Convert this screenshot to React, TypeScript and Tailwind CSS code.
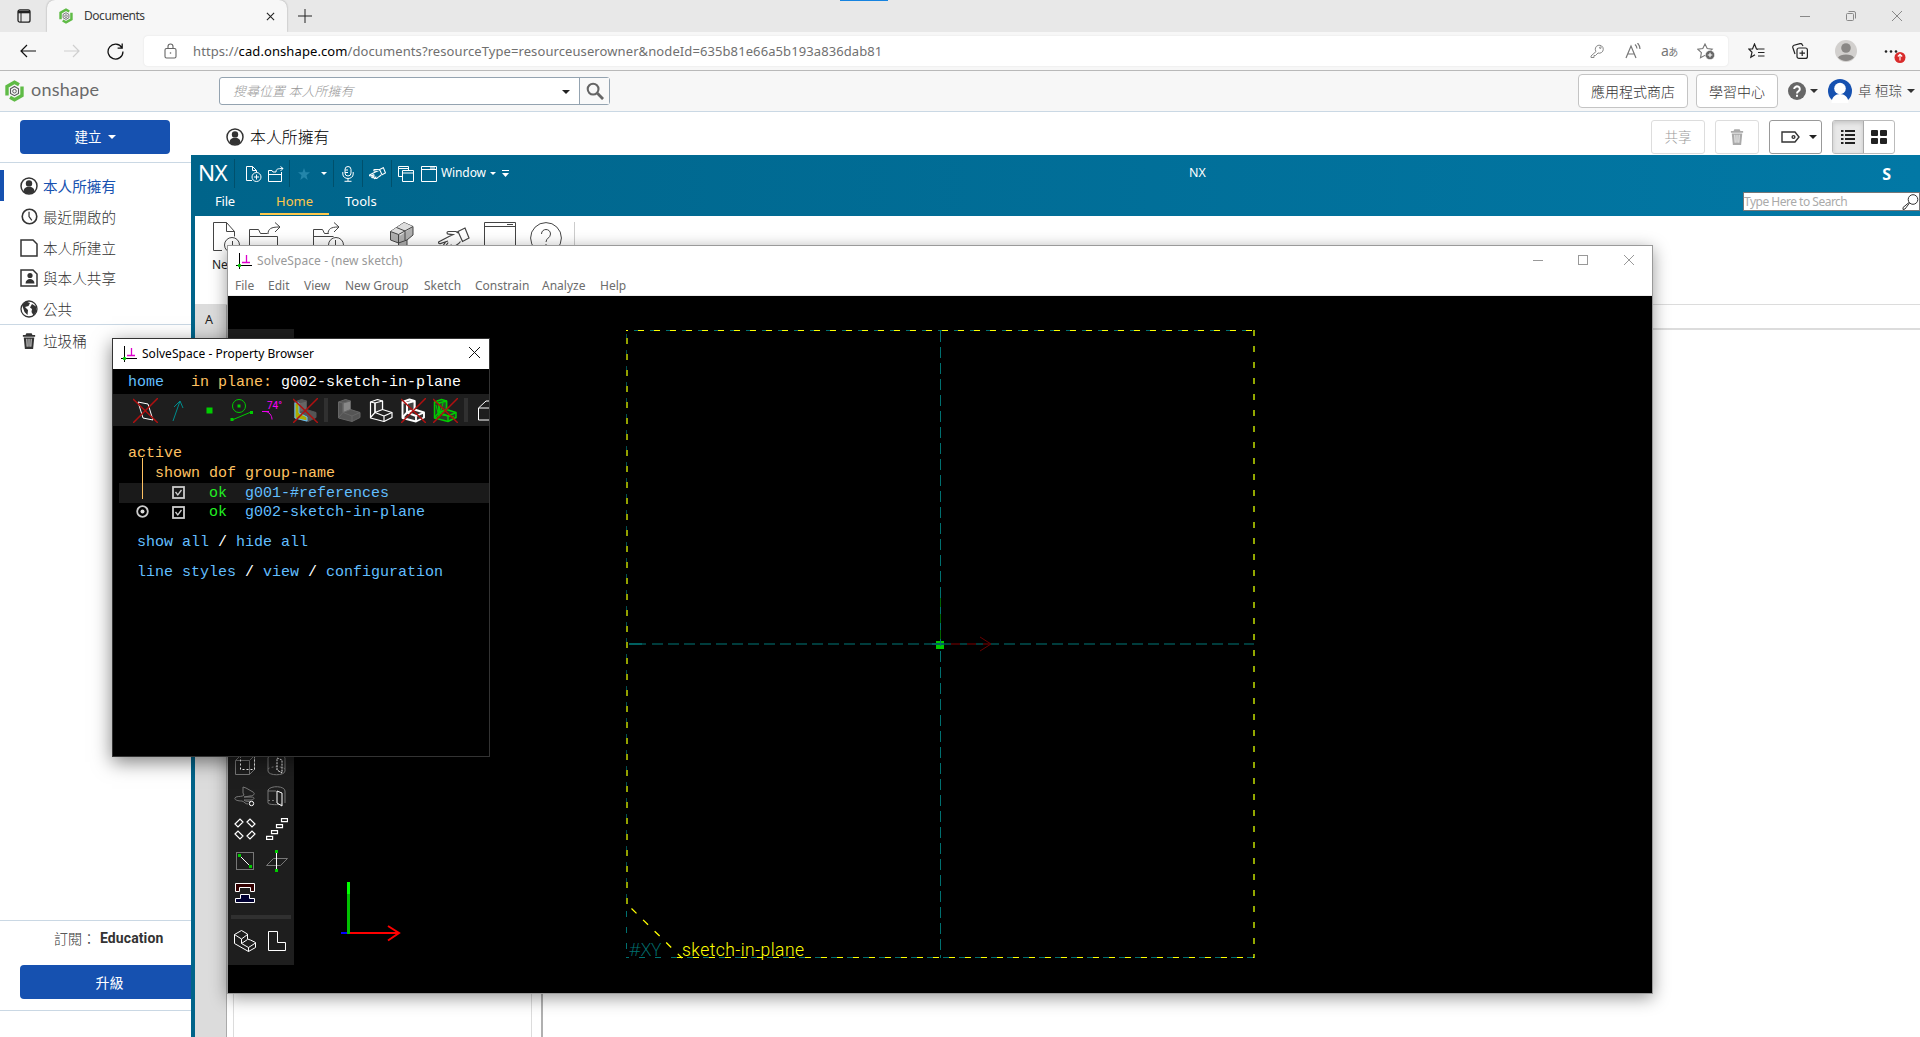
import React from "react";

type IconProps = { box: string; className?: string; children: React.ReactNode; stroke?: string; sw?: number };

function Icon({ box, className = "", children, stroke = "currentColor", sw = 1 }: IconProps) {
  return (
    <svg viewBox={box} className={"shrink-0 " + className} fill="none" stroke={stroke} strokeWidth={sw}>
      {children}
    </svg>
  );
}

function Caret({ className = "h-[4px] w-[8px]" }: { className?: string }) {
  return (
    <svg viewBox="0 0 8 4" preserveAspectRatio="none" className={"shrink-0 " + className} fill="currentColor">
      <path d="M0 0h8L4 4z" />
    </svg>
  );
}

function OnshapeMark({ className }: { className: string }) {
  return (
    <Icon box="0 0 20 22" className={className}>
      <path d="M2.500 15.500V6.500L10 2.200l4.500 2.600" stroke="#5fbb46" strokeWidth="3.400" />
      <path d="M17.500 6.500v9L10 19.800l-4.500-2.600" stroke="#5fbb46" strokeWidth="3.400" />
      <path d="M10 6.500l4 2.300v4.600l-4 2.300-4-2.300V8.800z" stroke="#58595b" strokeWidth="1.100" />
      <circle cx="10" cy="11.200" r="1.800" stroke="#58595b" strokeWidth="1" />
    </Icon>
  );
}

function Person({ className }: { className: string }) {
  return (
    <Icon box="0 0 18 18" className={className} stroke="#333">
      <circle cx="9" cy="9" r="8" strokeWidth="1.5" />
      <circle cx="9" cy="6.4" r="3.2" fill="#333" stroke="none" />
      <path d="M3.6 14.4c0-3 2-4.6 5.4-4.6s5.4 1.6 5.4 4.6C13 16 11 16.800 9 16.800S5 16 3.600 14.400z" fill="#333" stroke="none" />
    </Icon>
  );
}

function Trash({ className }: { className: string }) {
  return (
    <svg viewBox="0 0 16 18" className={"shrink-0 " + className} fill="currentColor">
      <path d="M5 0h6l1 2h3v2H1V2h3z M2 5h12l-1.300 13H3.300z" />
      <path d="M5.500 6.500l.4 9M8 6.500v9M10.500 6.500l-.4 9" stroke="#fff" strokeWidth="1" />
    </svg>
  );
}

function TabStrip() {
  return (
    <div className="flex h-8 bg-[#e8e8e8] text-[#3b3b3b]">
      <div className="flex w-[47px] items-center justify-center">
        <Icon box="0 0 14 14" className="h-[14px] w-[14px]" stroke="#222">
          <rect x="1" y=".8" width="12" height="12.400" rx="2" strokeWidth="1.3" />
          <path d="M1 3h12" strokeWidth="2.600" />
          <path d="M4 4v9" />
        </Icon>
      </div>
      <div className="flex h-full w-[240px] items-center rounded-t-lg bg-[#f7f7f7] pl-[11px] pr-[12px] shadow-[0_0_2px_rgba(0,0,0,0.35)]">
        <OnshapeMark className="h-4 w-[16px]" />
        <span className="ml-[10px] flex-1 text-[12px] tracking-[-0.45px]">Documents</span>
        <Icon box="0 0 10 10" className="h-[9px] w-[9px]" stroke="#222" sw={1.2}><path d="M1 1l8 8M9 1l-8 8" /></Icon>
      </div>
      <Icon box="0 0 14 14" className="ml-[11px] mt-[9px] h-[14px] w-[14px]" stroke="#222"><path d="M7 0v14M0 7h14" /></Icon>
      <div className="flex flex-1 items-center justify-end gap-[36px] pr-[18px] text-[#888]">
        <Icon box="0 0 10 10" className="h-[10px] w-[10px]"><path d="M0 5.500h10" /></Icon>
        <Icon box="0 0 10 10" className="h-[10px] w-[10px]"><rect x=".5" y="2.500" width="7" height="7" rx="1" /><path d="M2.500 .5H8a1.500 1.500 0 0 1 1.500 1.500v5.500" /></Icon>
        <Icon box="0 0 10 10" className="h-[10px] w-[10px]"><path d="M0 0l10 10M10 0L0 10" /></Icon>
      </div>
    </div>
  );
}

function AddressBar() {
  return (
    <div className="flex h-[39px] items-center border-b border-[#b9b9b9] bg-[#f7f7f7]">
      <Icon box="0 0 16 14" className="ml-5 h-[14px] w-[16px]" stroke="#111" sw={1.2}><path d="M16 7H1M7 1L1 7l6 6" /></Icon>
      <Icon box="0 0 16 14" className="ml-[28px] h-[14px] w-[16px]" stroke="#cfcfcf" sw={1.200}><path d="M0 7h15M9 1l6 6-6 6" /></Icon>
      <Icon box="0 0 16 16" className="ml-[27px] h-[17px] w-[17px]" stroke="#111" sw={1.200}><path d="M14 4.500A7 7 0 1 0 15 8M14.300 .5v4.300H10" /></Icon>
      <div className="ml-5 flex h-[30px] w-[1584px] items-center rounded bg-white pl-5 pr-[13px] text-[#707070] shadow-[0_0_2px_rgba(0,0,0,0.1)]">
        <Icon box="0 0 13 16" className="h-[16px] w-[13px]" stroke="#666" sw={1.100}>
          <rect x="1" y="5.500" width="11" height="9.500" rx="1.500" /><path d="M4 5.500V3.500a2.500 2.500 0 0 1 5 0v2" /><circle cx="6.500" cy="10" r=".8" fill="#666" stroke="none" />
        </Icon>
        <span className="ml-4 flex-1 whitespace-nowrap pt-px text-[13px] tracking-[0.095px]">
          https://<span className="text-black">cad.onshape.com</span>/documents?resourceType=resourceuserowner&amp;nodeId=635b81e66a5b193a836dab81
        </span>
        <Icon box="0 0 14 14" className="h-[14px] w-[14px]" stroke="#888"><path d="M6 7.500L1 12v1.500h3v-2h1.500L8 9a4 4 0 1 0-2-1.500z" /><circle cx="10.300" cy="3.700" r=".8" /></Icon>
        <Icon box="0 0 16 16" className="ml-[21px] h-4 w-4" stroke="#777" sw={1.200}><path d="M1 15L6 3l5 12M3 11h6M10 1.500a6 6 0 0 1 2 4M12.500 0A9 9 0 0 1 15 6" /></Icon>
        <span className="ml-[20px] w-[19px] text-[14px] leading-none tracking-[-0.5px] text-[#777]">a<span className="text-[10px]">あ</span></span>
        <Icon box="0 0 18 17" className="ml-[17px] h-[17px] w-[18px]" stroke="#777" sw={1.100}>
          <path d="M8 1l2.200 4.500 5 .7-3.600 3.500.8 5L8 12.300 3.500 14.700l.9-5L.8 6.200l5-.7z" /><circle cx="13" cy="12" r="4.600" fill="#666" stroke="#fff" strokeWidth=".5" /><path d="M13 9.700v4.600M10.700 12h4.600" stroke="#fff" />
        </Icon>
      </div>
      <Icon box="0 0 17 16" className="ml-5 h-4 w-[17px]" stroke="#222" sw={1.200}><path d="M10 6.500L8.500 6 6.500 1l-2 5H.8L4 9.300l-1.200 5L7 11.800M9 6h7.500M10 9.500h6.500M10 13h6.500" /></Icon>
      <Icon box="0 0 16 16" className="ml-[27px] h-4 w-4" stroke="#222" sw={1.200}><rect x="5" y="5" width="10.400" height="10.400" rx="2" /><path d="M10.200 7.500v5.500M7.500 10.200H13M3 11L.8 4.500A2 2 0 0 1 2 2.200L8 .6a2 2 0 0 1 2.300 1.200L11 3" /></Icon>
      <svg viewBox="0 0 22 22" className="ml-[27px] h-[22px] w-[22px] shrink-0"><circle cx="11" cy="11" r="11" fill="#d2d0ce" /><circle cx="11" cy="8" r="4.800" fill="#8a8886" /><path d="M3 17.500c2-4 14-4 16 0a11 11 0 0 1-16 0z" fill="#8a8886" /></svg>
      <svg viewBox="0 0 22 16" className="ml-[27px] mt-[9px] h-[16px] w-[22px] shrink-0"><g fill="#222"><circle cx="2" cy="3.500" r="1.300" /><circle cx="7" cy="3.500" r="1.300" /><circle cx="12" cy="3.500" r="1.300" /></g><circle cx="16" cy="9.500" r="5.500" fill="#d92b2b" /><path d="M16 12.500v-6M13.800 8.500L16 6.300l2.200 2.200" stroke="#fff" fill="none" strokeWidth="1.100" /></svg>
    </div>
  );
}

function OnshapeHeader() {
  return (
    <div className="flex h-[41px] items-center border-b border-[#cad8e4] bg-[#f7f7f7] text-[#333]">
      <OnshapeMark className="ml-[4px] h-[22px] w-[21px]" />
      <span className="ml-[6px] w-[71px] pb-[3px] font-[Lato] text-[18px] tracking-[0.25px] text-[#6a6a6a]">onshape</span>
      <div className="ml-[117px] flex h-7 w-[391px] items-stretch rounded-[3px] border border-[#94a3b0] bg-white">
        <div className="flex flex-1 items-center pl-[13px] pr-[9px]">
          <span className="flex-1 pt-[2px] text-[13px] font-light italic text-[#999]">搜尋位置 本人所擁有</span>
          <Caret className="mt-[2px] h-[4px] w-[8px] text-[#222]" />
        </div>
        <div className="flex w-[30px] items-center justify-center border-l border-[#94a3b0] bg-[#f9f9f9]">
          <Icon box="0 0 19 19" className="h-[18px] w-[18px]" stroke="#666"><circle cx="7.500" cy="7.500" r="5.700" strokeWidth="2.200" /><path d="M12 12l6 6" strokeWidth="3" /></Icon>
        </div>
      </div>
      <div className="flex flex-1 items-center justify-end pr-[5px] text-[14px] font-light">
        <button className="h-[34px] w-[110px] rounded border border-[#c4c4c4] bg-white">應用程式商店</button>
        <button className="ml-2 h-[34px] w-[82px] rounded border border-[#c4c4c4] bg-white">學習中心</button>
        <svg viewBox="0 0 18 18" className="ml-[10px] h-[18px] w-[18px]"><circle cx="9" cy="9" r="9" fill="#666" /><path d="M6.200 7a2.800 2.600 0 1 1 4.300 2.200c-1 .7-1.500 1-1.500 2.200M9 12.700v2" stroke="#fff" strokeWidth="2" fill="none" /></svg>
        <Caret className="ml-[4px] h-[4px] w-[8px] text-[#333]" />
        <svg viewBox="0 0 24 24" className="ml-[10px] h-6 w-6 text-[#1651b0]"><circle cx="12" cy="12" r="12" fill="currentColor" /><circle cx="12" cy="9.500" r="5.800" fill="#fff" /><path d="M3.500 24c0-12 17-12 17 0z" fill="#fff" /></svg>
        <span className="ml-[6px] w-[44px] whitespace-nowrap text-[13.500px]">卓 桓琮</span>
        <Caret className="ml-[5px] h-[4px] w-[8px] text-[#333]" />
      </div>
    </div>
  );
}

function SideItem({ icon, label, active, height = "h-[31px]" }: { icon: React.ReactNode; label: string; active?: boolean; height?: string }) {
  return (
    <div className={"flex items-center border-l-4 pl-4 " + height + " " + (active ? "border-[#1651b0] text-[#1651b0]" : "border-transparent text-[#333]")}>
      <span className="flex w-[18px] justify-center">{icon}</span>
      <span className={"ml-[5px] pt-[2px] text-[14.600px] " + (active ? "" : "font-light")}>{label}</span>
    </div>
  );
}

function Sidebar() {
  return (
    <aside className="flex w-[191px] shrink-0 flex-col bg-white">
      <div className="flex h-[51px] border-b border-[#cad8e4] pl-5 pt-2">
        <button className="flex h-[34px] w-[150px] items-center justify-center gap-[6px] rounded bg-[#1651b0] text-[13.500px] text-white">建立<Caret /></button>
      </div>
      <nav className="pt-[7px]">
        <SideItem active label="本人所擁有" icon={<Person className="h-[18px] w-[18px]" />} />
        <SideItem label="最近開啟的" icon={<Icon box="0 0 18 18" className="h-[17px] w-[17px]" stroke="#333"><circle cx="9" cy="9" r="7.700" strokeWidth="1.700" /><path d="M8.500 4v5l3 4" strokeWidth="1.300" /></Icon>} />
        <SideItem label="本人所建立" icon={<Icon box="0 0 18 18" className="h-[18px] w-[18px]" stroke="#333" sw={1.500}><path d="M1 1h12l4 4v12H1z" /></Icon>} />
        <SideItem height="h-[30px]" label="與本人共享" icon={<Icon box="0 0 18 18" className="h-[18px] w-[18px]" stroke="#333" sw={1.500}><path d="M1 1h12l4 4v12H1z" /><circle cx="10" cy="6.500" r="2.600" fill="#333" stroke="none" /><path d="M5.500 14.500c0-6 9-6 9 0z" fill="#333" stroke="none" /></Icon>} />
        <SideItem label="公共" icon={<Icon box="0 0 18 18" className="h-[18px] w-[18px]" stroke="#333"><circle cx="9" cy="9" r="8" strokeWidth="1.300" /><path d="M2 5l4-3.500L10 3 8.500 6 5 7l3 3-.5 5-3-3zM12 4l4 2.500.5 5-3 4-2-3.500.5-3-2-1.500z" fill="#333" stroke="none" /></Icon>} />
        <div className="h-px bg-[#cad8e4]" />
        <SideItem height="h-[32px]" label="垃圾桶" icon={<Trash className="h-4 w-[14px]" />} />
      </nav>
      <div className="mt-auto flex h-[117px] flex-col border-t border-[#cad8e4] text-[#333]">
        <div className="flex h-[44px] items-center pb-[9px] pl-[54px] text-[14px]">
          <span className="font-light">訂閱：</span><b className="ml-[4px] font-[Roboto] text-[14px] font-bold tracking-[0.1px]">Education</b>
        </div>
        <button className="ml-5 h-[34px] rounded-l bg-[#1651b0] text-[14px] text-white"><span className="mr-[-8px]">升級</span></button>
        <div className="mt-[11px] h-px bg-[#cad8e4]" />
      </div>
    </aside>
  );
}

function Documents() {
  return (
    <main className="flex-1 bg-white">
      <div className="flex h-[51px] items-start pl-[35px] pr-[25px] pt-2 text-[#222]">
        <div className="flex h-[34px] flex-1 items-center"><Person className="h-[18px] w-[18px]" /><span className="ml-[6px] pt-px text-[15.900px] font-light text-black">本人所擁有</span></div>
        <button className="h-[34px] w-[54px] rounded-[3px] border border-[#ddd] text-[13.500px] font-light text-[#999]">共享</button>
        <button className="ml-[10px] flex h-[34px] w-[44px] items-center justify-center rounded-[3px] border border-[#ddd] text-[#aaa]"><Trash className="h-4 w-[14px]" /></button>
        <button className="ml-[10px] flex h-[34px] w-[53px] items-center justify-between rounded-[3px] border border-[#999] pl-[11px] pr-[4px]">
          <Icon box="0 0 19 12" className="h-[12px] w-[19px]" stroke="#333" sw={1.400}><path d="M1 1h13l4 5-4 5H1z" /><circle cx="12.500" cy="6" r="1.400" /></Icon><Caret />
        </button>
        <div className="ml-[10px] flex h-[34px] w-[63px] overflow-hidden rounded-[3px] border border-[#bbb]">
          <div className="flex w-[31px] items-center justify-center border-r border-[#aaa] bg-[#e8e8e8] shadow-[inset_0_2px_4px_rgba(0,0,0,0.15)]">
            <Icon box="0 0 14 14" className="h-[14px] w-[14px]" stroke="#222" sw={1.800}><path d="M0 1h2.500M4 1h10M0 5h2.500M4 5h10M0 9h2.500M4 9h10M0 13h2.500M4 13h10" /></Icon>
          </div>
          <div className="grid flex-1 grid-cols-2 place-content-center justify-center gap-[2px] px-[7px]">
            {[0, 1, 2, 3].map((i) => <div key={i} className="h-[6px] w-[7px] rounded-[1px] bg-[#222]" />)}
          </div>
        </div>
      </div>
    </main>
  );
}

function Sep({ className }: { className: string }) {
  return <div className={"w-px shrink-0 bg-[#00506c] " + className} />;
}

function Hand({ className, sw = 1.2 }: { className: string; sw?: number }) {
  return (
    <Icon box="0 0 32 24" className={className} sw={sw}>
      <path d="M18 4.500H10.500c-2 0-2 2.600 0 2.700l4.500.5-4 1.800-10 5.200c-1.200 1 0 2.300 1.300 1.900L10 14M7.500 15.200l-2.300 3.300c-.5 1.800 1.300 2 2 1l3-4M10 18l-.8 2.500c.2 1.500 1.800 1.300 2.400.5l1.800-3.500M13 20.500c.5 1.500 2 1 3-.5 1.500-2 3.800-1.500 6.500-5.500M18 4.500l2 1.500M20 4.500l4.500 10 6.500-3.500L27 1z" />
    </Icon>
  );
}

function NxWindow() {
  return (
    <section className="absolute bottom-0 left-[191px] right-0 top-[155px] flex flex-col bg-white">
      <div className="flex h-[61px] flex-col bg-gradient-to-r from-[#00648a] to-[#0278a5] text-white">
        <div className="flex h-[37px] items-center">
          <span className="ml-[7px] w-[36px] pb-[2px] text-[22.500px] tracking-[-0.5px]">NX</span>
          <Sep className="h-[29px]" />
          <Icon box="0 0 16 16" className="ml-[11px] h-4 w-4"><path d="M6 14.500H.5V.5h6l4 4v2M6.500 .5v4h4" /><circle cx="10.500" cy="11" r="4.500" /><path d="M10.500 8.500v5M8 11h5" /></Icon>
          <Icon box="0 0 16 16" className="ml-[6px] h-4 w-4"><path d="M8 6H5L4 4.500H.5v11h13V6M.5 8.500h13M8 6c0-3 1.500-3.500 7-3.500M12.500 .500L15 2.500l-2.500 2.500" /></Icon>
          <Sep className="ml-[5px] h-[27px]" />
          <svg viewBox="0 0 12 12" className="ml-[8px] h-[12px] w-[12px]" fill="#2385aa"><path d="M6 0l1.500 4.300H12L8.500 7.200 9.700 12 6 9.200 2.300 12l1.200-4.800L0 4.300h4.500z" /></svg>
          <Caret className="ml-[11px] h-[3px] w-[6px]" />
          <Sep className="ml-[6px] h-[27px]" />
          <Icon box="0 0 12 16" className="ml-[8px] h-4 w-3"><rect x="3" y=".5" width="6" height="9.500" rx="3" /><path d="M.8 6v2c0 6 10.400 6 10.400 0V6M6 12.500V15M2.500 15.300h7M3 4h3M3 6.500h3" /></Icon>
          <Sep className="ml-[8px] h-[27px]" />
          <Hand className="ml-[6px] h-[13px] w-[17px]" sw={2} />
          <Sep className="ml-[5px] h-[27px]" />
          <Icon box="0 0 16 16" className="ml-[6px] h-4 w-4"><path d="M4.500 10.500h-4V.5h10v4M.5 2.500h10M4.500 4.500h11v11h-11zM4.500 7h11" /></Icon>
          <Icon box="0 0 16 16" className="ml-[7px] h-4 w-4"><path d="M.5 .5h15v15H.5zM.5 3.500h15M9 2h5" /></Icon>
          <span className="ml-[4px] w-[46px] pb-px text-[12px] tracking-[-0.1px]">Window</span>
          <Caret className="ml-[3px] h-[3px] w-[6px]" />
          <Icon box="0 0 7 7" className="ml-[6px] h-[7px] w-[7px]"><path d="M0 .5h7" /><path d="M0 3h7L3.500 7z" fill="#fff" stroke="none" /></Icon>
          <span className="ml-[680px] pb-px text-[12.500px]">NX</span>
          <span className="ml-auto mr-[29px] pb-px pt-[2px] text-[16px] font-bold">S</span>
        </div>
        <div className="flex h-6 items-start text-[13px]">
          <span className="ml-[15px] w-[58px] pl-[9px] leading-[18px] tracking-[-0.2px]">File</span>
          <span className="ml-[-4px] h-[23px] w-[69px] border-b-2 border-[#ffc84c] text-center leading-[18px] text-[#ffc84c]">Home</span>
          <span className="ml-[16px] leading-[18px]">Tools</span>
          <div className="ml-auto flex h-[19px] w-[177px] items-center justify-between border border-[#777] bg-white text-[12px] text-[#aaa]">
            <span className="pt-px tracking-[-0.5px]">Type Here to Search</span>
            <Icon box="0 0 17 16" className="h-4 w-[17px]" stroke="#333"><circle cx="11" cy="5.500" r="4.800" /><path d="M7.500 9L3 15l-2 .5v-2L7 8.500" /></Icon>
          </div>
        </div>
      </div>
      <div className="flex flex-1 border-l-4 border-[#00648a]">
        <div className="flex flex-1 flex-col">
          <div className="h-[89px] border-b border-[#dcdcdc] text-[#444]">
            <div className="flex h-[43px] items-start pl-[18px] pt-[6px]">
              <Icon box="0 0 28 32" className="h-8 w-7"><path d="M9 28.500H.5V.5h13l8 9v5M13.500 .5v9h8" /><circle cx="19" cy="23" r="7.500" /><path d="M19.500 19v8M15 23.500h8" /></Icon>
              <Icon box="0 0 32 32" className="ml-[8px] h-8 w-8"><path d="M.5 30V7.500h9l2 4h7M.5 14.500h28v15M19 12c0-5 3-7 11-7M26 .5l5 4.500-5 5" /></Icon>
              <Icon box="0 0 32 32" className="ml-[32px] h-8 w-8"><path d="M.5 30V7.500h9l2 4h4M.5 14.500h20M15 12c0-5 3-7 10-7M21 .5l5 4.500-5 5" /><circle cx="23" cy="23" r="7.500" /><path d="M22.500 18v6h4" /></Icon>
              <Icon box="0 0 24 30" className="ml-[45px] h-[30px] w-6">
                <path d="M.5 9.500L14 .5l9 4v8.500l-6 5v12H8.500v-9l-8-3z" fill="#b0b0b0" />
                <path d="M.5 9.500L14 .5l9 4-12.500 9z" fill="#ddd" stroke="none" />
                <path d="M.5 9.500l8 3v17M8.500 12.500L23 4.500M6.500 5.500l8.500 3.500v9M8.500 21L17 18" />
              </Icon>
              <Hand className="ml-[24px] mt-[5px] h-[24px] w-8" />
              <Icon box="0 0 32 32" className="ml-[14px] h-8 w-8"><path d="M.5 30V.5h31V30M.5 4.500h31M23 2.500h6" /></Icon>
              <Icon box="0 0 32 32" className="ml-[14px] h-8 w-8"><circle cx="16" cy="16" r="15.400" /><path d="M11.500 12c0-6 9-6 9 0 0 4-4.500 4-4.500 8M16 22v2" /></Icon>
              <div className="ml-3 h-9 w-px bg-[#ccc]" />
            </div>
            <div className="pl-[17px] text-[12px] leading-[12px] text-[#222]">New</div>
          </div>
          <div className="flex flex-1">
            <div className="w-8 border-r border-[#aaa] bg-[#dcdcdc] pl-[10px] pt-[7px] text-[12.500px] leading-4 text-[#222]">A</div>
            <div className="mr-px w-[7px] border-r border-[#dcdcdc]" />
            <div className="flex flex-1">
              <div className="w-[297px] border-r border-[#dcdcdc]" />
              <div className="ml-[9px] flex flex-1 border-l-2 border-[#b0b0b0]"><div className="h-[25px] flex-1 border-b-2 border-[#dcdcdc]" /></div>
            </div>
          </div>
        </div>
      </div>
    </section>
  );
}

function SolveMark({ className }: { className: string }) {
  return <Icon box="0 0 16 16" className={className}><path d="M3.500 0v16M0 12.500h16" stroke="#000" /><path d="M6 9.500h8M10.500 2v7" stroke="#d0c" strokeWidth="1.300" /><circle cx="3.500" cy="12.500" r="1.700" fill="#0c0" stroke="none" /></Icon>;
}

function Sketch() {
  return (
    <svg viewBox="228 296 1424 696" className="h-[696px] w-[1424px]" fill="none">
      <g stroke="#007070">
        <path d="M634 330.500H1254" strokeDasharray="4 12" />
        <path d="M626.500 334V904" strokeDasharray="4 12" opacity=".7" />
        <path d="M626.500 911V950" strokeDasharray="6 10" />
        <path d="M626 957.500h3" />
        <path d="M639 957.500H1254" strokeDasharray="6 10" />
        <path d="M940.500 331V958" strokeDasharray="11 5" />
        <path d="M652 644H1254" stroke="#003c3c" strokeWidth="2" strokeDasharray="11 5" />
        <path d="M629 644H642" stroke="#006060" strokeWidth="2" /><path d="M642 644h4" stroke="#003c3c" strokeWidth="2" />
      </g>
      <g stroke="#ff0">
        <path d="M626 330.500h2M638 330.500H1254" strokeDasharray="6 10" />
        <path d="M627 338V904" strokeDasharray="6 10" strokeWidth="1.500" stroke="#c4d800" />
        <path d="M1254 330V958" strokeDasharray="6 10" strokeWidth="1.500" stroke="#c4e000" />
        <path d="M631.500 908.500L682 958" strokeDasharray="7 9.200" strokeWidth="1.300" />
        <path d="M677 957.500H1254" strokeDasharray="6 10" />
      </g>
      <path d="M940.500 598V640" stroke="#006400" strokeDasharray="9 7" />
      <path d="M936 641h8v8h-8z" fill="#00c800" />
      <path d="M932 644h12" stroke="#006060" strokeWidth="2" /><path d="M940.500 641v5" stroke="#007070" />
      <path d="M951 644H990" stroke="#400000" strokeWidth="2" strokeDasharray="9 7" />
      <path d="M980 637l11 7-11 7" stroke="#680000" />
      <path d="M341 933h8" stroke="#00f" strokeWidth="2" />
      <path d="M348.500 882V934" stroke="#00c000" strokeWidth="3" />
      <path d="M348.500 882v12" stroke="#0f0" strokeWidth="3" />
      <path d="M350 933H399M388 926l11 7-11 7.500" stroke="#f00" strokeWidth="2" />
      <text x="629" y="956" fill="#007070" fontSize="17.500" fontFamily="Open Sans" fontWeight="300" textLength="32" lengthAdjust="spacingAndGlyphs">#XY</text>
      <text x="682" y="956" fill="#ff0" fontSize="17.500" fontFamily="Roboto" fontWeight="300" textLength="122" lengthAdjust="spacing">sketch-in-plane</text>
    </svg>
  );
}

function ToolColumn() {
  const c = "h-[22px] w-[22px]";
  const b = "0 0 22 22";
  return (
    <div className="absolute left-0 top-[33px] flex h-[636px] w-[66px] flex-col justify-end bg-[#1e1e1e] pb-[13px]">
      <div className="grid grid-cols-[32px_22px] gap-y-[10px] pl-[6px]">
        <Icon box={b} className={c} stroke="#777"><path d="M1.500 6.500h14v14h-14zM1.500 6.500l5-5h14l-5 5M20.500 1.500v14l-5 5" /><path d="M6.500 1.500v14h14v-14" stroke="#fff" strokeDasharray="2 2" /></Icon>
        <Icon box={b} className={c} stroke="#777"><path d="M2 4v13c0 5 17 5 17 0V4c0-4-17-4-17 0z" /><path d="M2 15c3-3 14-3 17 0" strokeDasharray="2 2" /><path d="M11 4l5 2v13l-5-3z" stroke="#fff" strokeDasharray="2 1" /></Icon>
        <Icon box={b} className={c} stroke="#777"><path d="M14 18c-3 0-3-2-6-3-6 0-9-2-6-4 3-1 6 0 8-2L9 7V1l3 1 7 4c3 2 0 4-3 4l-6 1 7 0c5 0 3 3 0 3l-7 0c2 2 4 1 7 2" /><circle cx="17.500" cy="17.500" r="2.200" stroke="#fff" /></Icon>
        <Icon box={b} className={c} stroke="#777"><path d="M2 4v13c0 2 12 2 14 1M2 4c3-5 17-4 17 1v12M2 5h8" /><path d="M2 14.500h8" strokeDasharray="2 2" /><path d="M11 5l5 2v13l-5-3z" stroke="#fff" /></Icon>
        <Icon box={b} className={c} stroke="#fff" sw={1.200}><path d="M1 6l5-5 3 3-5 5zM13 4l3-3 5 5-3 3zM1 16l3-3 5 5-3 3zM13 18l5-5 3 3-5 5z" /></Icon>
        <Icon box={b} className={c} stroke="#fff" sw={1.200}><path d="M15.500 .7h6v3h-6zM10.500 6.700h6v3h-6zM5.500 12.700h6v3h-6zM.6 18.400h6v3h-6z" /></Icon>
        <Icon box={b} className={c} stroke="#777"><rect x="2.500" y="2.500" width="17" height="17" /><path d="M5 5l11 11" stroke="#fff" /><path d="M4 4h3v3H4zM15 15h3v3h-3z" fill="#0c0" stroke="none" /></Icon>
        <Icon box={b} className={c} stroke="#777"><path d="M.5 15.500l7-7h14l-7 7z" /><path d="M10.500 1v20" stroke="#fff" /><path d="M9 0h3v3H9zM9 19h3v3H9z" fill="#0c0" stroke="none" /></Icon>
        <Icon box={b} className={c} stroke="#fff"><path d="M1.500 1.500h19v8h-4v-4h-11v4h-4z" fill="#300" /><path d="M1.500 20.500v-4h5v-4h9v4h5v4z" fill="#003" /></Icon>
      </div>
      <div className="mx-[3px] mt-[11px] h-1 bg-[#303030]" />
      <div className="mt-[11px] grid grid-cols-[32px_22px] pl-[6px]">
        <Icon box={b} className={c} stroke="#fff"><path d="M.5 4.500l7-4 6 3.500v5l3 1 5 2.500v5l-7 4-14-8zM.5 4.500l7 4.500 6-4.500M7.500 9v4.500l7 4v4M7.500 13.500l6-4M14.500 17.500l7-4.500" /></Icon>
        <Icon box={b} className={c} stroke="#fff"><path d="M2.500 1.500h9v11h8v8h-17z" /></Icon>
      </div>
    </div>
  );
}

const menus = [
  { label: "File", w: "w-[33px]" }, { label: "Edit", w: "w-[36px]" }, { label: "View", w: "w-[41px]" }, { label: "New Group", w: "w-[79px]" },
  { label: "Sketch", w: "w-[51px]" }, { label: "Constrain", w: "w-[67px]" }, { label: "Analyze", w: "w-[58px]" }, { label: "Help", w: "w-[40px]" },
];

function SolveSpaceWindow() {
  return (
    <section className="absolute left-[227px] top-[245px] h-[749px] w-[1426px] border border-[#9a9a9a] bg-white shadow-[0_4px_16px_rgba(0,0,0,0.4)]">
      <div className="flex h-[29px] items-center pl-[8px] pr-[18px] text-[#999]">
        <SolveMark className="h-4 w-4" />
        <span className="ml-[5px] flex-1 text-[12px] tracking-[0.09px]">SolveSpace - (new sketch)</span>
        <Icon box="0 0 10 10" className="h-[10px] w-[10px]"><path d="M0 4.500h10" /></Icon>
        <Icon box="0 0 10 10" className="mb-px ml-[35px] h-[10px] w-[10px]"><rect x=".5" y=".5" width="9" height="9" /></Icon>
        <Icon box="0 0 10 10" className="mb-px ml-[36px] h-[10px] w-[10px]"><path d="M0 0l10 10M10 0L0 10" /></Icon>
      </div>
      <div className="flex h-[20px] pl-[7px] text-[12px] leading-[22px] text-[#6d6d6d]">
        {menus.map((m) => <span key={m.label} className={"whitespace-nowrap " + m.w}>{m.label}</span>)}
      </div>
      <div className="relative h-[698px] border-t border-[#eee] bg-black">
        <Sketch />
        <ToolColumn />
      </div>
    </section>
  );
}

const Cross = () => <path d="M0 1l25 24M25 0L0 25" stroke="#b01010" strokeWidth="1.500" />;

function Solid({ fill, side, stroke, sw = 1 }: { fill: string; side: string; stroke: string; sw?: number }) {
  return (
    <g stroke={stroke} strokeWidth={sw} strokeLinejoin="round">
      <path d="M1.500 4l7-2.500 5 1.500v8.500l9.500 3v5l-8 4-13.500-3.500z" fill={side} />
      <path d="M6 5l7.500-2v8.500L6 14.500z" fill={fill} />
      <path d="M1.500 4L6 5v9.500l9 3.500 8-3.500M15 18v5.500M6 14.500l-4.500 5" fill="none" />
    </g>
  );
}

function BrowserTools() {
  const b = "0 0 25 25";
  const c = "h-[25px] w-[25px]";
  return (
    <div className="flex h-8 items-center gap-[7px] overflow-hidden bg-[#1e1e1e] pl-5">
      <Icon box={b} className={c}><path d="M5 4l10 2 5 16-10-2z" stroke="#fff" /><Cross /></Icon>
      <Icon box={b} className={c} stroke="#008c8c"><path d="M8 23l7-20M9 9l6-6 3 7" /></Icon>
      <Icon box={b} className={c}><path d="M9.500 9.500h6v6h-6z" fill="#0c0" stroke="none" /></Icon>
      <Icon box={b} className={c} stroke="#0c0"><circle cx="10" cy="8" r="6.500" /><path d="M3 22l19-8" /><path d="M8.500 6.500h3v3h-3zM1.500 20h3v3h-3zM21 13h3v3h-3z" fill="#0c0" stroke="none" /></Icon>
      <Icon box={b} className={c + " overflow-visible"} stroke="#e0e"><path d="M1 13.500h7M4 13.500c4 0 7 4 7 8" /><text x="6" y="11" fontSize="10" fontFamily="Roboto" fill="#f0f" stroke="none">74°</text></Icon>
      <Icon box={b} className={c}><Solid fill="#666" side="#555" stroke="#555" /><path d="M2 5h4v10l8 4v4L2 20z" fill="#aa0" /><Cross /></Icon>
      <div className="-ml-px mr-[2px] h-6 w-1 shrink-0 bg-[#303030]" />
      <Icon box={b} className={c}><Solid fill="#888" side="#555" stroke="#666" /></Icon>
      <Icon box={b} className={c}><Solid fill="#333" side="#222" stroke="#fff" sw={1.200} /></Icon>
      <Icon box={b} className={c}><Solid fill="#444" side="#333" stroke="#fff" sw={1.900} /><Cross /></Icon>
      <Icon box={b} className={c}><Solid fill="#2c4a2c" side="#2a3a2a" stroke="#0c0" sw={1.500} /><path d="M3 7l3 12 4-14M3 20l9-8M9 17l12 2" stroke="#0c0" /><Cross /></Icon>
      <div className="-ml-px mr-[3px] h-6 w-1 shrink-0 bg-[#303030]" />
      <Icon box={b} className={c} stroke="#fff"><path d="M.5 10L8 3h12M.5 10h15M.5 10v12h14" /></Icon>
    </div>
  );
}

function Check() {
  return <Icon box="0 0 13 13" className="mb-[2px] h-[13px] w-[13px]" stroke="#ccc"><rect x="1" y="1" width="11" height="11" strokeWidth="1.800" /><path d="M3.500 6l2.300 3L9.500 4" strokeWidth="1.300" /></Icon>;
}

function PropertyBrowser() {
  return (
    <section className="absolute left-[112px] top-[338px] h-[419px] w-[378px] border border-[#333] bg-black shadow-[0_5px_18px_rgba(0,0,0,0.5)]">
      <div className="flex h-[30px] items-center bg-white pl-[8px] pr-[9px] text-black">
        <SolveMark className="h-4 w-4" />
        <span className="ml-[5px] flex-1 text-[12px] tracking-[0.02px]">SolveSpace - Property Browser</span>
        <Icon box="0 0 11 11" className="mb-[3px] h-[11px] w-[11px]" stroke="#111"><path d="M0 0l11 11M11 0L0 11" /></Icon>
      </div>
      <div className="whitespace-pre font-['Liberation_Mono'] text-[15px] leading-5 text-[#62bfff]">
        <div className="h-[25px] pl-[15px] pt-[4px]">home<span className="text-[#ffc262]">   in plane: </span><span className="text-white">g002-sketch-in-plane</span></div>
        <BrowserTools />
        <div className="pl-[15px] pt-[18px] text-[#ffc262]">active</div>
        <div className="pl-[42px] text-[#ffc262]">shown dof group-name</div>
        <div className="-mt-px ml-[6px] flex h-5 items-center bg-[#1a1a1a]">
          <span className="ml-[23px] mr-[29px] h-[41px] w-px -translate-y-[15px] bg-[#ffc262]" /><Check />
          <span className="ml-[24px] pt-px text-[#22f022]">ok</span><span className="ml-[18px] pt-px">g001-#references</span>
        </div>
        <div className="ml-[6px] flex h-5 items-center">
          <Icon box="0 0 13 13" className="mb-[3px] ml-[17px] mr-[23px] h-[13px] w-[13px]" stroke="#ccc"><circle cx="6.500" cy="6.500" r="5.300" strokeWidth="1.800" /><circle cx="6.500" cy="6.500" r="2" fill="#ddd" stroke="none" /></Icon><Check />
          <span className="ml-[24px] text-[#22f022]">ok</span><span className="ml-[18px]">g002-sketch-in-plane</span>
        </div>
        <div className="mt-[10px] pl-[24px]">show all <span className="text-white">/</span> hide all</div>
        <div className="mt-[10px] pl-[24px]">line styles <span className="text-white">/</span> view <span className="text-white">/</span> configuration</div>
      </div>
    </section>
  );
}

export default function App() {
  return (
    <div className="relative flex h-[1037px] w-[1920px] flex-col overflow-hidden bg-white font-['Noto_Sans','Noto_Sans_CJK_TC',sans-serif]">
      <TabStrip />
      <AddressBar />
      <OnshapeHeader />
      <div className="flex flex-1"><Sidebar /><Documents /></div>
      <div className="absolute left-[840px] top-0 h-px w-12 bg-[#1683e0]" />
      <NxWindow />
      <SolveSpaceWindow />
      <PropertyBrowser />
    </div>
  );
}
